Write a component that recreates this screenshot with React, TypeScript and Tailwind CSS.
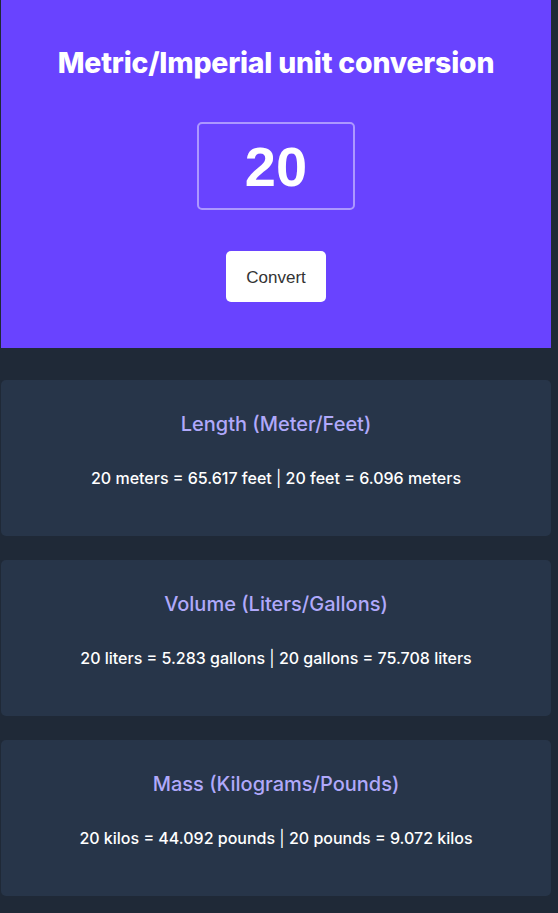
import React, { useState } from "react";

type Row = {
  title: string;
  text: (n: number) => string;
};

const rows: Row[] = [
  {
    title: "Length (Meter/Feet)",
    text: (n) =>
      `${n} meters = ${(n * 3.28084).toFixed(3)} feet | ${n} feet = ${(n * 0.3048).toFixed(3)} meters`,
  },
  {
    title: "Volume (Liters/Gallons)",
    text: (n) =>
      `${n} liters = ${(n * 0.264172).toFixed(3)} gallons | ${n} gallons = ${(n * 3.78541).toFixed(3)} liters`,
  },
  {
    title: "Mass (Kilograms/Pounds)",
    text: (n) =>
      `${n} kilos = ${(n * 2.20462).toFixed(3)} pounds | ${n} pounds = ${(n * 0.453592).toFixed(3)} kilos`,
  },
];

export default function App() {
  const [value, setValue] = useState("20");
  const [num, setNum] = useState(20);

  return (
    <div
      className="min-h-[913px] bg-[#1f2937] pl-[1px] pr-[7px] pb-4"
      style={{ fontFamily: "Inter, 'Noto Sans', sans-serif" }}
    >
      {/* header */}
      <div className="h-[348px] bg-[#6943ff] flex flex-col items-center pt-[44px]">
        <h1 className="text-[28.4px] leading-[38px] font-extrabold text-white tracking-[-0.2px]">
          Metric/Imperial unit conversion
        </h1>
        <input
          value={value}
          onChange={(e) => setValue(e.target.value)}
          className="mt-[40px] w-[158px] h-[88px] border-2 border-white/45 rounded-[5px] bg-transparent text-center text-white text-[56px] font-bold outline-none font-['Liberation_Sans',Arial,sans-serif]"
        />
        <button
          onClick={() => setNum(Number(value) || 0)}
          className="mt-[41px] w-[100px] h-[51px] pt-[2px] bg-white rounded-[5px] text-[17px] text-[#333] font-['Liberation_Sans',Arial,sans-serif]"
        >
          Convert
        </button>
      </div>

      {/* results */}
      <div className="flex flex-col gap-6 pt-8">
        {rows.map((r) => {
          const [a, b] = r.text(num).split(" | ");
          return (
            <div
              key={r.title}
              className="h-[156px] bg-[#273549] rounded-[5px] flex flex-col items-center pt-[30px]"
            >
              <h2 className="text-[20px] leading-[28px] font-medium text-[#b0a9fb]">
                {r.title}
              </h2>
              <p className="mt-[30px] text-[16px] leading-[20px] font-medium text-white">
                {a} <span className="font-normal">|</span> {b}
              </p>
            </div>
          );
        })}
      </div>
    </div>
  );
}
